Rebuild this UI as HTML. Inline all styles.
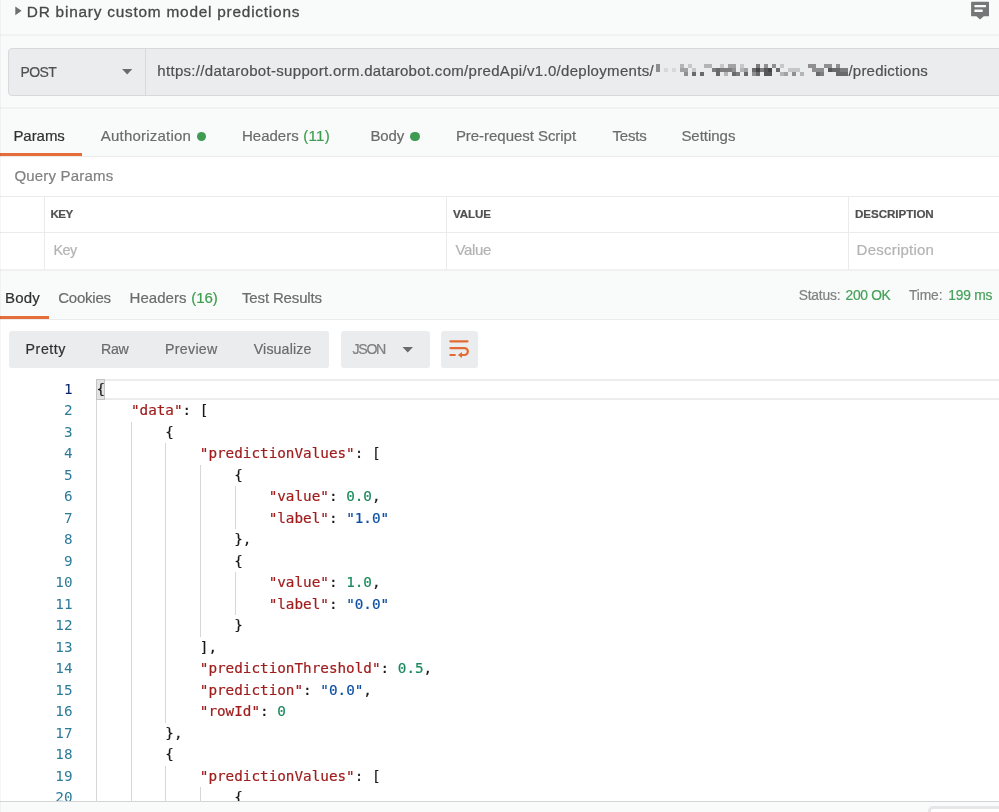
<!DOCTYPE html>
<html lang="en">
<head>
<meta charset="utf-8">
<title>DR binary custom model predictions</title>
<style>
*{box-sizing:border-box;margin:0;padding:0}
html,body{width:999px;height:812px;overflow:hidden;background:#f9fafa}
body{position:relative;font-family:"Liberation Sans",sans-serif;color:#505050}
#root{position:absolute;left:0;top:0;width:999px;height:812px;overflow:hidden;will-change:transform}
.abs{position:absolute}
.t{position:absolute;white-space:nowrap;line-height:20px;-webkit-text-stroke:.2px}
.hl{position:absolute;left:0;width:999px;height:2px;background:#f2f2f3}
.hl1{position:absolute;left:0;width:999px;height:1px;background:#ebebeb}
#tri{left:15.500px;top:6.400px;width:0;height:0;border-left:6px solid #6b6b6b;border-top:4.5px solid transparent;border-bottom:4.5px solid transparent}
#urlbar{left:8px;top:48px;width:1000px;height:48px;background:#ebeced;border:1px solid #d9d9da;border-radius:4px}
#urldiv{left:145px;top:48px;width:1px;height:47px;background:#d9d9da}
#caret1{left:122px;top:69px;width:0;height:0;border-top:6px solid #6b6b6b;border-left:5px solid transparent;border-right:5px solid transparent}
.dot{position:absolute;width:9.600px;height:9.600px;border-radius:50%;background:#3f9b51}
#ul1{left:0;top:153px;width:82px;height:3px;background:#e56d3a}
#white1{left:0;top:157px;width:999px;height:113px;background:#fff}
.vl{position:absolute;width:1px;background:#ebebeb}
#ul2{left:0;top:316px;width:49px;height:3px;background:#e56d3a}
#white2{left:0;top:320px;width:999px;height:481px;background:#fff}
.btn{position:absolute;background:#ebeced;border-radius:3px;top:331px;height:37px}
#code{position:absolute;left:0;top:378.500px;width:999px;height:422.500px;overflow:hidden;font-family:"DejaVu Sans Mono","Liberation Mono",monospace;font-size:14.300px}
.ln{position:absolute;left:0;width:72.500px;text-align:right;color:#2b7b98;line-height:21.500px;height:21.500px;white-space:pre}
.ln.on{color:#0b216f}
.cl{position:absolute;left:96.500px;-webkit-text-stroke:.2px;line-height:21.500px;height:21.500px;white-space:pre;color:#1a1a1a}
.k{color:#a01d1d}.s{color:#0d50a3}.n{color:#17895b}
.ig{position:absolute;width:1px;background:#d6d6d6}
#curline{left:96px;top:0;width:910px;height:21.500px;border:2px solid #ececec}
#brk{left:96px;top:0;width:9px;height:21.500px;background:#e2e4e2;border:1px solid #c4c4c4}
</style>
</head>
<body>
<div id="root">
<svg class="abs" style="left:14px;top:5px" width="10" height="12" viewBox="0 0 10 12"><path d="M1.300 1.400L7.600 5.800L1.300 10.200Z" fill="#6e6e6e"/></svg>
<div class="t" style="left:26.8px;top:1.9px;font-size:15.4px;color:#484848;-webkit-text-stroke:.3px;letter-spacing:0.77px">DR binary custom model predictions</div>
<svg class="abs" style="left:969px;top:0px" width="24" height="22" viewBox="0 0 24 22"><path d="M2.600 1.800h16.900a.5.500 0 0 1 .5.500v13.400a.5.500 0 0 1-.5.500H14.800L11 19.600 7.400 16.200H2.600a.5.500 0 0 1-.5-.5V2.300a.5.500 0 0 1 .5-.5z" fill="#747678"/><rect x="5.300" y="4.900" width="11.800" height="2.400" rx=".8" fill="#fafafa"/><rect x="5.300" y="9.600" width="8.500" height="2.400" rx=".8" fill="#fafafa"/></svg>
<div class="hl" style="top:34px"></div>
<div class="abs" id="urlbar"></div>
<div class="abs" id="urldiv"></div>
<div class="t" style="left:20.6px;top:61.6px;font-size:14.0px;color:#505050;letter-spacing:-0.67px">POST</div>
<svg class="abs" style="left:120px;top:66px" width="14" height="10" viewBox="0 0 14 10"><path d="M2.100 3H12.300L7.200 8.500Z" fill="#6b6b6b"/></svg>
<div class="t" style="left:157.3px;top:60.6px;font-size:15.0px;color:#505050;letter-spacing:0.31px">https://datarobot-support.orm.datarobot.com/predApi/v1.0/deployments/</div>
<svg class="abs" style="left:656px;top:64px" width="192" height="12" viewBox="0 0 192 12" shape-rendering="crispEdges"><rect x="0" y="0" width="4" height="4" fill="rgb(143,143,145)"/><rect x="24" y="0" width="4" height="4" fill="rgb(180,180,182)"/><rect x="32" y="0" width="4" height="4" fill="rgb(199,199,201)"/><rect x="48" y="0" width="4" height="4" fill="rgb(180,180,182)"/><rect x="52" y="0" width="4" height="4" fill="rgb(180,180,182)"/><rect x="64" y="0" width="4" height="4" fill="rgb(199,199,201)"/><rect x="72" y="0" width="4" height="4" fill="rgb(162,162,164)"/><rect x="76" y="0" width="4" height="4" fill="rgb(162,162,164)"/><rect x="84" y="0" width="4" height="4" fill="rgb(199,199,201)"/><rect x="100" y="0" width="4" height="4" fill="rgb(125,125,127)"/><rect x="108" y="0" width="4" height="4" fill="rgb(143,143,145)"/><rect x="116" y="0" width="4" height="4" fill="rgb(143,143,145)"/><rect x="124" y="0" width="4" height="4" fill="rgb(199,199,201)"/><rect x="152" y="0" width="4" height="4" fill="rgb(143,143,145)"/><rect x="156" y="0" width="4" height="4" fill="rgb(143,143,145)"/><rect x="168" y="0" width="4" height="4" fill="rgb(143,143,145)"/><rect x="172" y="0" width="4" height="4" fill="rgb(143,143,145)"/><rect x="180" y="0" width="4" height="4" fill="rgb(143,143,145)"/><rect x="0" y="4" width="4" height="4" fill="rgb(143,143,145)"/><rect x="8" y="4" width="4" height="4" fill="rgb(217,217,219)"/><rect x="16" y="4" width="4" height="4" fill="rgb(217,217,219)"/><rect x="24" y="4" width="4" height="4" fill="rgb(162,162,164)"/><rect x="28" y="4" width="4" height="4" fill="rgb(162,162,164)"/><rect x="36" y="4" width="4" height="4" fill="rgb(199,199,201)"/><rect x="56" y="4" width="4" height="4" fill="rgb(125,125,127)"/><rect x="60" y="4" width="4" height="4" fill="rgb(106,106,108)"/><rect x="64" y="4" width="4" height="4" fill="rgb(125,125,127)"/><rect x="68" y="4" width="4" height="4" fill="rgb(125,125,127)"/><rect x="72" y="4" width="4" height="4" fill="rgb(125,125,127)"/><rect x="76" y="4" width="4" height="4" fill="rgb(143,143,145)"/><rect x="84" y="4" width="4" height="4" fill="rgb(180,180,182)"/><rect x="88" y="4" width="4" height="4" fill="rgb(162,162,164)"/><rect x="96" y="4" width="4" height="4" fill="rgb(106,106,108)"/><rect x="100" y="4" width="4" height="4" fill="rgb(70,70,72)"/><rect x="104" y="4" width="4" height="4" fill="rgb(125,125,127)"/><rect x="108" y="4" width="4" height="4" fill="rgb(88,88,90)"/><rect x="112" y="4" width="4" height="4" fill="rgb(70,70,72)"/><rect x="120" y="4" width="4" height="4" fill="rgb(106,106,108)"/><rect x="132" y="4" width="4" height="4" fill="rgb(199,199,201)"/><rect x="136" y="4" width="4" height="4" fill="rgb(199,199,201)"/><rect x="140" y="4" width="4" height="4" fill="rgb(199,199,201)"/><rect x="156" y="4" width="4" height="4" fill="rgb(143,143,145)"/><rect x="160" y="4" width="4" height="4" fill="rgb(143,143,145)"/><rect x="164" y="4" width="4" height="4" fill="rgb(143,143,145)"/><rect x="172" y="4" width="4" height="4" fill="rgb(88,88,90)"/><rect x="176" y="4" width="4" height="4" fill="rgb(106,106,108)"/><rect x="180" y="4" width="4" height="4" fill="rgb(106,106,108)"/><rect x="184" y="4" width="4" height="4" fill="rgb(125,125,127)"/><rect x="188" y="4" width="4" height="4" fill="rgb(125,125,127)"/><rect x="28" y="8" width="4" height="4" fill="rgb(143,143,145)"/><rect x="36" y="8" width="4" height="4" fill="rgb(106,106,108)"/><rect x="44" y="8" width="4" height="4" fill="rgb(106,106,108)"/><rect x="60" y="8" width="4" height="4" fill="rgb(106,106,108)"/><rect x="68" y="8" width="4" height="4" fill="rgb(180,180,182)"/><rect x="76" y="8" width="4" height="4" fill="rgb(106,106,108)"/><rect x="80" y="8" width="4" height="4" fill="rgb(125,125,127)"/><rect x="88" y="8" width="4" height="4" fill="rgb(106,106,108)"/><rect x="96" y="8" width="4" height="4" fill="rgb(143,143,145)"/><rect x="100" y="8" width="4" height="4" fill="rgb(106,106,108)"/><rect x="108" y="8" width="4" height="4" fill="rgb(88,88,90)"/><rect x="112" y="8" width="4" height="4" fill="rgb(88,88,90)"/><rect x="124" y="8" width="4" height="4" fill="rgb(180,180,182)"/><rect x="128" y="8" width="4" height="4" fill="rgb(162,162,164)"/><rect x="136" y="8" width="4" height="4" fill="rgb(143,143,145)"/><rect x="144" y="8" width="4" height="4" fill="rgb(180,180,182)"/><rect x="160" y="8" width="4" height="4" fill="rgb(106,106,108)"/><rect x="164" y="8" width="4" height="4" fill="rgb(125,125,127)"/><rect x="180" y="8" width="4" height="4" fill="rgb(106,106,108)"/><rect x="184" y="8" width="4" height="4" fill="rgb(106,106,108)"/><rect x="188" y="8" width="4" height="4" fill="rgb(106,106,108)"/></svg>
<div class="t" style="left:848.4px;top:60.6px;font-size:15.0px;color:#505050;letter-spacing:0.24px">/predictions</div>
<div class="hl" style="top:107px"></div>
<div class="t" style="left:13.4px;top:126.3px;font-size:15.0px;color:#303030;letter-spacing:-0.04px">Params</div>
<div class="t" style="left:100.8px;top:126.3px;font-size:15.0px;color:#6b6b6b;letter-spacing:0.21px">Authorization</div>
<div class="dot" style="left:196.700px;top:131.800px"></div>
<div class="t" style="left:242.0px;top:126.3px;font-size:15.0px;color:#6b6b6b">Headers</div>
<div class="t" style="left:303.2px;top:126.3px;font-size:15.0px;color:#3c9d4e;letter-spacing:0.33px">(11)</div>
<div class="t" style="left:370.5px;top:126.3px;font-size:15.0px;color:#6b6b6b;letter-spacing:-0.17px">Body</div>
<div class="dot" style="left:410.200px;top:131.700px"></div>
<div class="t" style="left:455.9px;top:126.3px;font-size:15.0px;color:#6b6b6b;letter-spacing:-0.04px">Pre-request Script</div>
<div class="t" style="left:612.4px;top:126.3px;font-size:15.0px;color:#6b6b6b;letter-spacing:-0.17px">Tests</div>
<div class="t" style="left:681.4px;top:126.3px;font-size:15.0px;color:#6b6b6b;letter-spacing:-0.03px">Settings</div>
<div class="hl1" style="top:156px"></div>
<div class="abs" id="ul1"></div>
<div class="abs" id="white1"></div>
<div class="t" style="left:14.4px;top:165.6px;font-size:15.0px;color:#808080;letter-spacing:0.20px">Query Params</div>
<div class="hl1" style="top:196px"></div>
<div class="hl1" style="top:232px"></div>
<div class="hl" style="top:269px;background:#f1f1f2"></div>
<div class="vl" style="left:44px;top:196px;height:74px"></div>
<div class="vl" style="left:446px;top:196px;height:74px"></div>
<div class="vl" style="left:848px;top:196px;height:74px"></div>
<div class="t" style="left:50.6px;top:204.4px;font-size:11.6px;color:#505050;letter-spacing:-0.62px;font-weight:bold">KEY</div>
<div class="t" style="left:452.9px;top:204.4px;font-size:11.6px;color:#505050;letter-spacing:-0.06px;font-weight:bold">VALUE</div>
<div class="t" style="left:855.0px;top:204.4px;font-size:11.6px;color:#505050;letter-spacing:-0.05px;font-weight:bold">DESCRIPTION</div>
<div class="t" style="left:53.6px;top:240.2px;font-size:14.4px;color:#b3b3b3;letter-spacing:-0.62px">Key</div>
<div class="t" style="left:455.4px;top:240.2px;font-size:15.0px;color:#b3b3b3;letter-spacing:-0.31px">Value</div>
<div class="t" style="left:856.6px;top:240.2px;font-size:15.0px;color:#b3b3b3;letter-spacing:0.23px">Description</div>
<div class="t" style="left:4.9px;top:288.0px;font-size:15.0px;color:#303030;letter-spacing:0.23px">Body</div>
<div class="t" style="left:58.2px;top:288.0px;font-size:15.0px;color:#6b6b6b;letter-spacing:-0.22px">Cookies</div>
<div class="t" style="left:129.6px;top:288.0px;font-size:15.0px;color:#6b6b6b;letter-spacing:0.03px">Headers</div>
<div class="t" style="left:191.2px;top:288.0px;font-size:15.0px;color:#3c9d4e;letter-spacing:-0.03px">(16)</div>
<div class="t" style="left:242.0px;top:288.0px;font-size:15.0px;color:#6b6b6b;letter-spacing:-0.15px">Test Results</div>
<div class="t" style="left:798.7px;top:285.6px;font-size:13.8px;color:#808080;letter-spacing:-0.18px">Status:</div>
<div class="t" style="left:845.6px;top:285.6px;font-size:13.8px;color:#45a059;letter-spacing:-0.32px">200 OK</div>
<div class="t" style="left:909.0px;top:285.6px;font-size:13.8px;color:#808080;letter-spacing:-0.12px">Time:</div>
<div class="t" style="left:948.2px;top:285.6px;font-size:13.8px;color:#45a059;letter-spacing:-0.20px">199 ms</div>
<div class="hl1" style="top:319px"></div>
<div class="abs" id="ul2"></div>
<div class="abs" id="white2"></div>
<div class="btn" style="left:8.500px;width:320.500px"></div>
<div class="t" style="left:25.6px;top:338.8px;font-size:14.2px;color:#303030;letter-spacing:0.55px">Pretty</div>
<div class="t" style="left:101.1px;top:338.8px;font-size:14.2px;color:#6b6b6b;letter-spacing:-0.38px">Raw</div>
<div class="t" style="left:165.1px;top:338.8px;font-size:14.2px;color:#6b6b6b;letter-spacing:0.29px">Preview</div>
<div class="t" style="left:253.8px;top:338.8px;font-size:14.2px;color:#6b6b6b;letter-spacing:0.12px">Visualize</div>
<div class="btn" style="left:341px;width:88.500px"></div>
<div class="t" style="left:352.5px;top:338.8px;font-size:14.2px;color:#808080;letter-spacing:-1.33px">JSON</div>
<svg class="abs" style="left:400px;top:344px" width="16" height="12" viewBox="0 0 16 12"><path d="M2.500 3H13L7.750 8.500Z" fill="#6b6b6b"/></svg>
<div class="btn" style="left:441px;width:37px"></div>
<svg class="abs" style="left:441px;top:331px" width="37" height="37" viewBox="0 0 37 37" fill="none" stroke="#e46a35" stroke-width="2.200" stroke-linecap="round"><path d="M9.400 10.300H26.500M9.400 17.100H23.400A3.450 3.450 0 0 1 23.400 24H20.500M9.400 24H13.800"/><path d="M16.900 24L21 21.100V26.900Z" fill="#e46a35" stroke="none"/></svg>
<div id="code">
<div class="abs" id="curline"></div><div class="abs" id="brk"></div>
<div class="ln on" style="top:0px">1</div><div class="cl" style="top:0px">{</div>
<div class="ln" style="top:21.5px">2</div><div class="cl" style="top:21.5px">    <span class="k">"data"</span>: [</div>
<div class="ln" style="top:43px">3</div><div class="cl" style="top:43px">        {</div>
<div class="ln" style="top:64.5px">4</div><div class="cl" style="top:64.5px">            <span class="k">"predictionValues"</span>: [</div>
<div class="ln" style="top:86px">5</div><div class="cl" style="top:86px">                {</div>
<div class="ln" style="top:107.5px">6</div><div class="cl" style="top:107.5px">                    <span class="k">"value"</span>: <span class="n">0.0</span>,</div>
<div class="ln" style="top:129px">7</div><div class="cl" style="top:129px">                    <span class="k">"label"</span>: <span class="s">"1.0"</span></div>
<div class="ln" style="top:150.5px">8</div><div class="cl" style="top:150.5px">                },</div>
<div class="ln" style="top:172px">9</div><div class="cl" style="top:172px">                {</div>
<div class="ln" style="top:193.5px">10</div><div class="cl" style="top:193.5px">                    <span class="k">"value"</span>: <span class="n">1.0</span>,</div>
<div class="ln" style="top:215px">11</div><div class="cl" style="top:215px">                    <span class="k">"label"</span>: <span class="s">"0.0"</span></div>
<div class="ln" style="top:236.5px">12</div><div class="cl" style="top:236.5px">                }</div>
<div class="ln" style="top:258px">13</div><div class="cl" style="top:258px">            ],</div>
<div class="ln" style="top:279.5px">14</div><div class="cl" style="top:279.5px">            <span class="k">"predictionThreshold"</span>: <span class="n">0.5</span>,</div>
<div class="ln" style="top:301px">15</div><div class="cl" style="top:301px">            <span class="k">"prediction"</span>: <span class="s">"0.0"</span>,</div>
<div class="ln" style="top:322.5px">16</div><div class="cl" style="top:322.5px">            <span class="k">"rowId"</span>: <span class="n">0</span></div>
<div class="ln" style="top:344px">17</div><div class="cl" style="top:344px">        },</div>
<div class="ln" style="top:365.5px">18</div><div class="cl" style="top:365.5px">        {</div>
<div class="ln" style="top:387px">19</div><div class="cl" style="top:387px">            <span class="k">"predictionValues"</span>: [</div>
<div class="ln" style="top:408.5px">20</div><div class="cl" style="top:408.5px">                {</div>
<div class="ig" style="left:96.0px;top:21.5px;height:408.5px"></div>
<div class="ig" style="left:130.6px;top:43px;height:387px"></div>
<div class="ig" style="left:165.2px;top:64.5px;height:279.5px"></div>
<div class="ig" style="left:165.2px;top:387px;height:43px"></div>
<div class="ig" style="left:199.9px;top:86px;height:172px"></div>
<div class="ig" style="left:199.9px;top:408.5px;height:21.5px"></div>
<div class="ig" style="left:234.5px;top:107.5px;height:43px"></div>
<div class="ig" style="left:234.5px;top:193.5px;height:43px"></div>
</div>
<div class="hl1" style="top:801px;background:#d4d4d7"></div>
<div class="abs" style="left:928px;top:806px;width:90px;height:20px;border:3px solid #e6e6e8;border-radius:5px;background:#fff"></div>
<div class="abs" style="left:0;top:0;width:1px;height:812px;background:rgba(0,0,0,.035)"></div>
</div>
</body>
</html>
